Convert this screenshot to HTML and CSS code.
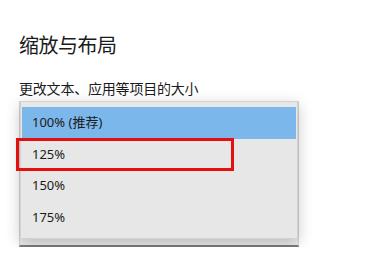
FILE: index.html
```html
<!DOCTYPE html>
<html lang="zh-CN">
<head>
<meta charset="utf-8">
<link rel="stylesheet" href="styles.css">
</head>
<body>
<div class="page">
  <h1 class="title">缩放与布局</h1>
  <div class="label">更改文本、应用等项目的大小</div>
  <div class="combo-wrap">
    <div class="combo"></div>
    <ul class="popup">
      <li class="item selected">100% (推荐)</li>
      <li class="item">125%</li>
      <li class="item">150%</li>
      <li class="item">175%</li>
    </ul>
    <div class="mark"></div>
  </div>
</div>
</body>
</html>
```
FILE: styles.css
```css
html, body {
  margin: 0;
  padding: 0;
  background: #ffffff;
}
.page {
  padding: 30px 0 0 19px;
  font-family: "Noto Sans CJK SC", "Noto Sans", sans-serif;
  color: #1b1b1b;
}
.title {
  margin: 0;
  font-size: 20px;
  font-weight: 400;
  line-height: 30px;
  letter-spacing: -0.5px;
}
.label {
  margin-top: 19px;
  font-size: 14px;
  line-height: 18px;
  letter-spacing: -0.2px;
}
.combo-wrap {
  position: relative;
  margin-top: 4px;
  width: 280px;
}
.combo {
  height: 144px;
  background: #ececec;
  border-left: 1px solid #d4d4d4;
  border-right: 1px solid #d4d4d4;
  border-bottom: 2px solid #7c7c7c;
}
.popup {
  position: absolute;
  left: 1px;
  top: 0;
  width: 276px;
  height: 131px;
  margin: 0;
  padding: 5px 0 0 0;
  list-style: none;
  background: #e7e7e7;
  border: 1px solid #d2d2d2;
  box-shadow: 0 4px 14px rgba(0, 0, 0, 0.22);
}
.item {
  height: 31.5px;
  line-height: 31.5px;
  padding-left: 10px;
  margin: 0 1px;
  font-family: "Noto Sans", "Noto Sans CJK SC", sans-serif;
  font-size: 13px;
  color: #1b1b1b;
}
.item.selected {
  background: #7bb7ea;
}
.mark {
  position: absolute;
  left: -3px;
  top: 37px;
  width: 212px;
  height: 27px;
  border: 3px solid #e3100f;
}
```
